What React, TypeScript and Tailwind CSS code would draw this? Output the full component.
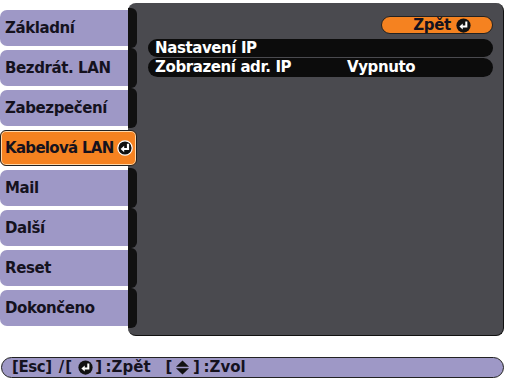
import React from "react";

const font = { fontFamily: '"DejaVu Sans", "Liberation Sans", sans-serif' };

function EnterIcon({ size = 15, ring = false }: { size?: number; ring?: boolean }) {
  return (
    <svg width={size} height={size} viewBox="0 0 16 16" className="shrink-0">
      <circle cx="8" cy="8" r={ring ? 7.2 : 7.6} fill="#111" stroke={ring ? "#fff" : "none"} strokeWidth={ring ? 1.2 : 0} />
      <path d="M11 3.8 V9 H6.5" fill="none" stroke="#fff" strokeWidth="2.2" />
      <polygon points="3.6,9 7.2,5.8 7.2,12.2" fill="#fff" />
    </svg>
  );
}

function UpDownIcon() {
  return (
    <svg width="15" height="15" viewBox="0 0 14 15" className="shrink-0">
      <polygon points="7,0.5 13.5,6.8 0.5,6.8" fill="#111" />
      <polygon points="7,14.5 13.5,8.2 0.5,8.2" fill="#111" />
    </svg>
  );
}

const menu = [
  "Základní",
  "Bezdrát. LAN",
  "Zabezpečení",
  "Kabelová LAN",
  "Mail",
  "Další",
  "Reset",
  "Dokončeno",
];

const txt = "text-[15px] font-bold leading-none tracking-[-0.4px] whitespace-nowrap";

function MenuItem({ label, active }: { label: string; active: boolean }) {
  if (active) {
    return (
      <div className="h-[36px] w-[137px] rounded-[6px] border border-[#222] bg-[#f58220] shadow-[inset_0_0_0_1px_#ffd7a8] flex items-center pl-[4px] pr-[3px] justify-between">
        <span className="text-[15px] font-bold leading-none tracking-[-0.7px] whitespace-nowrap text-[#15121e] pt-[1px]">{label}</span>
        <EnterIcon size={16} ring />
      </div>
    );
  }
  return (
    <div className="h-[36px] flex">
      <div className="w-[128px] rounded-l-[7px] bg-[#9e98c6] flex items-center pl-[5px]">
        <span className={`${txt} text-[#15121e] pt-[1px]`}>{label}</span>
      </div>
      <div className="w-[9px] -my-[2px] rounded-r-[6px] bg-[#111]" />
    </div>
  );
}

export default function App() {
  return (
    <div className="w-[506px] h-[380px] bg-white overflow-hidden" style={font}>
      <div className="flex items-start">
        <div className="relative z-10 w-[137px] pt-[10px] flex flex-col gap-[4px]">
          {menu.map((m) => (
            <MenuItem key={m} label={m} active={m === "Kabelová LAN"} />
          ))}
        </div>
        <div className="-ml-[9px] mt-[3px] w-[376px] h-[333px] rounded-[8px] bg-[#4a4a4f] border-r border-b border-[#111] shadow-[1px_1px_0_#fff] pt-[13px] pr-[10px] pl-[20px]">
          <div className="flex justify-end">
            <div className="h-[18px] w-[112px] rounded-full border border-[#222] bg-[#f58220] flex items-center justify-center gap-[5px] pl-[10px]">
              <span className={`${txt} text-[#15121e]`}>Zpět</span>
              <EnterIcon size={15} />
            </div>
          </div>
          <div className="mt-[5px] flex flex-col gap-[1px]">
            <div className="h-[18px] rounded-full bg-[#0c0c0c] flex items-center pl-[7px]">
              <span className={`${txt} text-white`}>Nastavení IP</span>
            </div>
            <div className="h-[19px] rounded-full bg-[#0c0c0c] flex items-center pl-[7px]">
              <span className={`${txt} w-[192px] text-white`}>Zobrazení adr. IP</span>
              <span className={`${txt} text-white`}>Vypnuto</span>
            </div>
          </div>
        </div>
      </div>
      <div className={`mt-[21px] ml-[1px] w-[503px] h-[21px] rounded-full border border-[#222] bg-[#9e98c6] flex items-center pl-[10px] ${txt} text-[#15121e]`}>
        <span>[Esc]</span>
        <span className="ml-[7px] tracking-[1px]">/[</span>
        <span className="ml-[5px]"><EnterIcon size={15} /></span>
        <span className="ml-[2px]">]</span>
        <span className="ml-[4px] tracking-[0px]">:Zpět</span>
        <span className="ml-[15px]">[</span>
        <span className="ml-[3px]"><UpDownIcon /></span>
        <span className="ml-[3px]">]</span>
        <span className="ml-[4px] tracking-[0px]">:Zvol</span>
      </div>
    </div>
  );
}
